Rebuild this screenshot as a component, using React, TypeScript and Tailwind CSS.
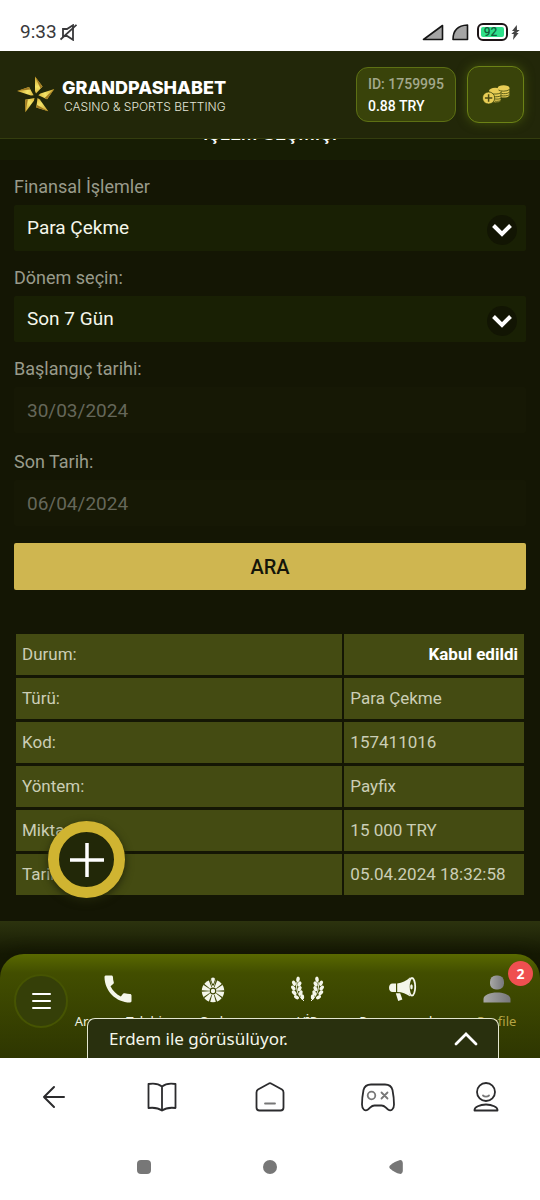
import React from "react";
import { MdCall } from "react-icons/md";

const rows = [
  { label: "Türü:", value: "Para Çekme" },
  { label: "Kod:", value: "157411016" },
  { label: "Yöntem:", value: "Payfix" },
  { label: "Miktar:", value: "15 000 TRY" },
  { label: "Tarih:", value: "05.04.2024 18:32:58" },
];

function StatusBar() {
  return (
    <div className="flex items-center justify-between h-[51px] pl-5 pr-5 pt-[13px] bg-white text-[#38383a]">
      <div className="flex items-center gap-[3px]">
        <span className="text-[19px] leading-6">9:33</span>
        <svg width="17" height="17" viewBox="0 0 17 17" fill="none" stroke="#38383a" strokeWidth="1.8">
          <path d="M3 5h4l6-3.8v14.600l-6-3.8H3z" />
          <path d="M.5 15.500L16.500.8" />
        </svg>
      </div>
      <div className="flex items-center">
        <svg width="22" height="17" viewBox="0 0 22 17" className="mr-2">
          <path d="M1.500 15.500L20.500 1.500v14z" fill="#a5a5a5" stroke="#151515" strokeWidth="1.6" strokeLinejoin="round" />
        </svg>
        <svg width="17" height="17" viewBox="0 0 17 17" className="mr-2">
          <path d="M1 15.500C1 7 5 1.500 15.500 1v14.500z" fill="#a5a5a5" stroke="#151515" strokeWidth="1.6" strokeLinejoin="round" />
        </svg>
        <span className="flex items-center w-[31px] h-[18px] p-[2px] border-2 border-[#1c1416] rounded-md bg-white">
          <span className="flex items-center justify-center w-full h-full pr-1 rounded-xs bg-[#2ee08a] text-[12px] leading-none font-medium text-[#12603c]">92</span>
        </span>
        <svg width="9" height="15" viewBox="0 0 9 15" className="ml-[3px]" fill="#444">
          <path d="M5.800 0L1 6h2.600L.3 9h2.500l-.8 6 5.600-7H5.300L8.700 5H6z" />
        </svg>
      </div>
    </div>
  );
}

function LogoStar() {
  return (
    <svg width="38" height="38" viewBox="0 0 38 38" className="shrink-0">
      <defs>
        <linearGradient id="gold" x1="0" y1="0" x2="0" y2="1">
          <stop offset="0" stopColor="#c9a02c" />
          <stop offset="0.6" stopColor="#f4e468" />
          <stop offset="1" stopColor="#dcb83e" />
        </linearGradient>
      </defs>
      {[0, 72, 144, 216, 288].map((deg) => (
        <g key={deg} transform={`rotate(${deg} 19 20)`}>
          <path d="M18 0.500V15L19 17.500L25.500 10.500z" fill="url(#gold)" />
          <path d="M18 0.500L25.500 10.500L23.500 12.500z" fill="#a07a22" />
        </g>
      ))}
    </svg>
  );
}

function CoinsIcon() {
  return (
    <svg width="28" height="20" viewBox="0 0 28 20">
      <g fill="#e8cd55">
        <path d="M16 3v8c1 1.200 3.200 1.600 5.600 1.600s5-.6 5.700-1.900V3z" />
        <path d="M7.500 6v9.500c1.200 1.300 3.400 2.200 6 2.200s4.600-.7 5.500-2V6z" stroke="#3a440a" strokeWidth="0.8" />
        <ellipse cx="21.6" cy="3" rx="5.900" ry="2.700" />
        <ellipse cx="13.200" cy="5.700" rx="6.200" ry="2.900" />
      </g>
      <g fill="none" stroke="#3a440a" strokeWidth="0.8">
        <path d="M16.500 5C18.500 6.600 25 6.600 27.300 4.600M19.500 8.400c2.500.6 6 .2 7.800-1M19.500 10.800c2.500.4 6 0 7.800-1" />
        <path d="M7.200 7.600C9 9.500 17 9.600 19.300 7.400M11.500 11.600c3 .4 6 0 7.800-1M13 14c3 .3 5 0 6.300-.8M12.500 16.200c2.500.3 5 0 6.300-.7" />
      </g>
      <circle cx="6.600" cy="13" r="6.100" fill="#e8cd55" stroke="#3a440a" strokeWidth="0.8" />
      <path d="M6.600 9.300v7.400M2.900 13h7.400" stroke="#4b4a12" strokeWidth="1.5" />
    </svg>
  );
}

function Header() {
  return (
    <header className="flex items-center justify-between h-[88px] pl-[17px] pr-4 bg-[#222709] border-b border-[#343d0e]">
      <a href="#" className="flex items-center gap-[7px]">
        <LogoStar />
        <span className="flex flex-col pt-1 font-['Inter',sans-serif] text-white">
          <span className="text-[18px] leading-5 font-extrabold">GRANDPASHABET</span>
          <span className="pl-0.5 text-[12px] leading-[18px] font-light text-[#e4e6d8]">CASINO &amp; SPORTS BETTING</span>
        </span>
      </a>
      <div className="flex items-center gap-[11px]">
        <button className="flex flex-col justify-center h-[55px] px-[11px] rounded-xl border border-[#5d7014] bg-[#39430a] text-left text-[14px] leading-[22px] font-medium text-white">
          <span className="text-[#a2a88c]">ID: 1759995</span>
          <span>0.88 TRY</span>
        </button>
        <button aria-label="Para yatır" className="flex items-center justify-center w-[57px] h-[57px] rounded-xl border border-[#6c8216] bg-[#39430a] shadow-[0_0_10px_1px_#3d4a0c]">
          <CoinsIcon />
        </button>
      </div>
    </header>
  );
}

type FieldProps = {
  id: string;
  label: string;
  value: string;
};

function SelectField({ id, label, value }: FieldProps) {
  return (
    <div className="mb-[15px]">
      <label htmlFor={id} className="block mb-1.5 text-[18px] leading-6 text-[#999b8b]">{label}</label>
      <div className="relative">
        <select id={id} className="appearance-none block w-full h-[46px] px-[13px] rounded-xs bg-[#192004] text-[19px] text-[#f4f6ea]">
          <option>{value}</option>
        </select>
        <span className="absolute right-[9px] top-[10px] flex items-center justify-center w-[30px] h-[30px] rounded-full bg-[#121503] pointer-events-none">
          <svg width="20" height="13" viewBox="0 0 20 13" fill="none" stroke="#fff" strokeWidth="4">
            <path d="M1.500 1.500l8.500 8.500 8.500-8.500" />
          </svg>
        </span>
      </div>
    </div>
  );
}

function DateField({ id, label, value }: FieldProps) {
  return (
    <div className="mb-[17px]">
      <label htmlFor={id} className="block mb-1.5 text-[18px] leading-6 text-[#999b8b]">{label}</label>
      <input id={id} type="text" readOnly defaultValue={value} className="block w-full h-[46px] px-[13px] rounded-xs bg-[#161805] text-[19px] text-[#65675a]" />
    </div>
  );
}

function WheelIcon() {
  return (
    <svg width="24" height="27" viewBox="0 0 24 27">
      <circle cx="12" cy="15" r="11.2" fill="#f4f6ea" />
      {[18, 54, 90, 126, 162, 198, 234, 270, 306, 342].map((deg) => (
        <path key={deg} d="M11.700 11L11.300 3.500h1.400L12.300 11z" fill="#3b4501" transform={`rotate(${deg} 12 15)`} />
      ))}
      <circle cx="12" cy="15" r="2.800" fill="#f4f6ea" stroke="#3b4501" strokeWidth="1.2" />
      <path d="M12 1c1.600 0 2.300 1 2.300 2.300C14.300 5 13 7.500 12 9.500 11 7.500 9.700 5 9.700 3.300 9.700 2 10.400 1 12 1z" fill="#f4f6ea" stroke="#3b4501" strokeWidth="1" />
    </svg>
  );
}

const leaves = [
  { x: 7, y: 3.4, r: 12 },
  { x: 3, y: 7.2, r: -28 },
  { x: 8.4, y: 8, r: 32 },
  { x: 2.3, y: 12, r: -35 },
  { x: 8.6, y: 12.6, r: 28 },
  { x: 3.2, y: 16.8, r: -45 },
  { x: 9.8, y: 17, r: 15 },
  { x: 5.5, y: 21.2, r: -60 },
  { x: 11.4, y: 21, r: 0 },
];

function LaurelIcon() {
  const branch = (
    <>
      <path d="M6 6C4.600 13 6.500 19 13 25" fill="none" stroke="#f4f6ea" strokeWidth="1" />
      {leaves.map((leaf) => (
        <ellipse key={leaf.y} cx={leaf.x} cy={leaf.y} rx="1.800" ry="2.800" fill="#f4f6ea" transform={`rotate(${leaf.r} ${leaf.x} ${leaf.y})`} />
      ))}
    </>
  );
  return (
    <svg width="33" height="27" viewBox="0 0 33 27">
      {branch}
      <g transform="translate(33 0) scale(-1 1)">{branch}</g>
    </svg>
  );
}

function MegaphoneIcon() {
  return (
    <svg width="29" height="27" viewBox="0 0 29 27" fill="#f4f6ea">
      <path d="M8 7.500v8.500H4.500C2.300 16 1 14.500 1 11.800s1.300-4.300 3.500-4.300z" />
      <path d="M9.200 7.500c5-.4 9-2.700 13-6.200-1.700 5.500-1.700 14 0 19.200-4-3-8-4.500-13-4.600z" />
      <path d="M7.800 17.300h4.400l2.200 6.200-4.200 1.400z" />
      <ellipse cx="24" cy="10.800" rx="3.200" ry="8.800" fill="none" stroke="#f4f6ea" strokeWidth="1.8" />
      <ellipse cx="23.500" cy="10.800" rx="1.300" ry="2.600" />
    </svg>
  );
}

function ProfileIcon() {
  return (
    <svg width="28" height="28" viewBox="0 0 28 28">
      <defs>
        <linearGradient id="silver" x1="0" y1="0" x2="1" y2="0">
          <stop offset="0" stopColor="#a8a8a6" />
          <stop offset="1" stopColor="#77777b" />
        </linearGradient>
      </defs>
      <rect x="7" y="0.5" width="14" height="14" rx="6" fill="url(#silver)" />
      <path d="M.5 27.500V24C.5 20 7 17.500 14 17.500S27.500 20 27.500 24v3.500z" fill="url(#silver)" />
    </svg>
  );
}

type NavItemProps = {
  label: string;
  active?: boolean;
  children: React.ReactNode;
};

function NavItem({ label, active, children }: NavItemProps) {
  return (
    <a href="#" className={`relative flex flex-col items-center pt-5 text-[13px] leading-4 whitespace-nowrap ${active ? "text-[#b5a443]" : "text-[#eef0e0]"}`}>
      <span className="flex items-center justify-center h-[30px] mb-[9px]">{children}</span>
      {label}
      {active && (
        <span className="absolute right-[11px] top-[7px] flex items-center justify-center w-[25px] h-[25px] rounded-full bg-[#ef4f50] text-[14px] font-bold text-white">2</span>
      )}
    </a>
  );
}

function BottomNav() {
  return (
    <footer className="pt-[33px] overflow-hidden bg-linear-[to_bottom,#2c330e,#262c0b_10px,#151903_33px] font-['Noto_Sans',sans-serif]">
      <nav className="relative flex h-[104px] rounded-t-3xl bg-linear-[to_bottom,#596900,#424e00_18%,#2e3601] shadow-[0_-4px_12px_#141703]">
        <div className="flex w-[71px] pl-[14px] pt-5">
          <button aria-label="Menü" className="flex flex-col items-center justify-center gap-[5px] w-[54px] h-[54px] rounded-full border-2 border-[#465402] bg-[#353f08]">
            <span className="w-[19px] h-[2px] rounded-full bg-white" />
            <span className="w-[19px] h-[2px] rounded-full bg-white" />
            <span className="w-[19px] h-[2px] rounded-full bg-white" />
          </button>
        </div>
        <div className="flex-1 grid grid-cols-5 -mr-1">
          <NavItem label="Aranma Talebi">
            <MdCall size={36} color="#f4f6ea" />
          </NavItem>
          <NavItem label="Çark">
            <WheelIcon />
          </NavItem>
          <NavItem label="VİP">
            <LaurelIcon />
          </NavItem>
          <NavItem label="Promosyonlar">
            <MegaphoneIcon />
          </NavItem>
          <NavItem label="Profile" active>
            <ProfileIcon />
          </NavItem>
        </div>

        {/* Live chat bar */}
        <button className="absolute left-[87px] right-[41px] bottom-0 flex items-center justify-between h-10 pl-[21px] pr-5 rounded-t-lg border border-b-0 border-[#e3e6cf] bg-[#29300e] text-[17px] text-[#f4f6ea]">
          Erdem ile görüsülüyor.
          <svg width="24" height="15" viewBox="0 0 24 15" fill="none" stroke="#fff" strokeWidth="2.8" strokeLinecap="round">
            <path d="M2 13L12 3l10 10" />
          </svg>
        </button>
      </nav>
    </footer>
  );
}

function BrowserBar() {
  return (
    <div className="grid grid-cols-5 place-items-center h-[78px] bg-white">
      <button aria-label="Geri">
        <svg width="24" height="24" viewBox="0 0 24 24" fill="none" stroke="#2b2b2d" strokeWidth="2" strokeLinecap="round" strokeLinejoin="round">
          <path d="M22 12H2M12 2L2 12l10 10" />
        </svg>
      </button>
      <button aria-label="Kitaplık">
        <svg width="30" height="30" viewBox="0 0 30 30" fill="none" stroke="#2b2b2d" strokeWidth="1.8" strokeLinejoin="round">
          <path d="M15 4.500C12 2 6 1.200 1.500 2v24c5-.6 10 0 13.500 2.500 3.500-2.500 8.500-3.100 13.500-2.500V2C24 1.200 18 2 15 4.500zM15 4.500v24" />
        </svg>
      </button>
      <button aria-label="Ana sayfa">
        <svg width="30" height="30" viewBox="0 0 30 30" fill="none" stroke="#2b2b2d" strokeWidth="1.8" strokeLinecap="round" strokeLinejoin="round">
          <path d="M13.500 1.700Q15 .7 16.500 1.700L27 7.500Q28.500 8.400 28.500 10.500V25.500Q28.500 28.500 25.500 28.500H4.500Q1.500 28.500 1.500 25.500V10.500Q1.500 8.400 3 7.500z" />
          <path d="M10 21.500h10" stroke="#777" />
        </svg>
      </button>
      <button aria-label="Oyunlar">
        <svg width="34" height="30" viewBox="0 0 34 30" fill="none" stroke="#2b2b2d" strokeWidth="1.8" strokeLinecap="round" strokeLinejoin="round">
          <path d="M10 2.500H24C28 2.500 30.500 4 31.500 8 32.500 13 33 18 33 22.500 33 27.500 30 29.500 27 27.500 24 25.500 24 23.500 20.500 23.500H13.500C10 23.500 10 25.500 7 27.500 4 29.500 1 27.500 1 22.500 1 18 1.500 13 2.500 8 3.500 4 6 2.500 10 2.500z" />
          <circle cx="10.5" cy="13.5" r="3.8" stroke="#777" />
          <path d="M20.500 10.500l6 6M26.500 10.500l-6 6" stroke="#777" />
        </svg>
      </button>
      <button aria-label="Hesap">
        <svg width="26" height="30" viewBox="0 0 26 30" fill="none" stroke="#2b2b2d" strokeWidth="1.8" strokeLinecap="round" strokeLinejoin="round">
          <circle cx="13" cy="10" r="9" />
          <path d="M10 13.500c1.500 1.500 4.500 1.500 6 0" stroke="#777" />
          <path d="M1.500 28.500C1 25 7 22.500 13 22.500S25 25 24.500 28.500z" />
        </svg>
      </button>
    </div>
  );
}

function SystemNav() {
  return (
    <div className="flex items-center justify-center gap-28 h-16 pb-0.5 bg-white">
      <button aria-label="Son uygulamalar" className="w-[14px] h-[14px] rounded bg-[#777]" />
      <button aria-label="Ana ekran" className="w-[14px] h-[14px] rounded-full bg-[#777]" />
      <button aria-label="Geri">
        <svg width="14" height="14" viewBox="0 0 14 14" fill="#777">
          <path d="M1 5.500C4 2.500 8 .8 10.500.2 12.500-.2 13.500 1 13.800 3v8c-.3 2-1.300 3.200-3.300 2.800C8 13.200 4 11.500 1 8.500Q-.4 7 1 5.500z" />
        </svg>
      </button>
    </div>
  );
}

export default function App() {
  return (
    <div className="min-h-screen bg-white font-['Roboto',sans-serif]">
      <StatusBar />
      <Header />

      {/* Page title, scrolled under the header */}
      <div className="flex items-end justify-center h-[21px] pb-[14px] overflow-hidden bg-[#171d04]">
        <h1 className="text-[19px] leading-6 font-medium text-white">İŞLEM GEÇMİŞİ</h1>
      </div>

      <main className="relative px-[14px] pt-[15px] pb-[23px] bg-[#141604]">
        <form onSubmit={(e) => e.preventDefault()}>
          <SelectField id="type" label="Finansal İşlemler" value="Para Çekme" />
          <SelectField id="period" label="Dönem seçin:" value="Son 7 Gün" />
          <DateField id="start" label="Başlangıç tarihi:" value="30/03/2024" />
          <DateField id="end" label="Son Tarih:" value="06/04/2024" />
          <button type="submit" className="block w-full h-[47px] rounded-xs bg-[#cfb650] text-[20px] font-medium text-[#14150a]">ARA</button>
        </form>

        <table className="w-full mt-[41px] table-fixed border-separate border-spacing-x-[2px] border-spacing-y-[3px] text-[17px] leading-6 text-[#cbceb6]">
          <tbody>
            <tr className="h-[41px]">
              <th scope="row" className="w-[64.5%] px-1.5 pb-0.5 bg-[#444b12] text-left font-normal">Durum:</th>
              <td className="px-1.5 pb-0.5 bg-[#444b12] text-right font-bold text-white">Kabul edildi</td>
            </tr>
            {rows.map((row) => (
              <tr key={row.label} className="h-[41px]">
                <th scope="row" className="px-1.5 pb-0.5 bg-[#444b12] text-left font-normal">{row.label}</th>
                <td className="px-1.5 pb-0.5 bg-[#444b12]">{row.value}</td>
              </tr>
            ))}
          </tbody>
        </table>

        <button aria-label="Ekle" className="absolute left-12 bottom-[23px] flex items-center justify-center w-[77px] h-[77px] rounded-full border-[11px] border-[#d0b431] bg-[#222808] shadow-[0_3px_8px_#22260a]">
          <svg width="34" height="34" viewBox="0 0 34 34" stroke="#fff" strokeWidth="3.5">
            <path d="M17 0v34M0 17h34" />
          </svg>
        </button>
      </main>

      <BottomNav />
      <BrowserBar />
      <SystemNav />
    </div>
  );
}
